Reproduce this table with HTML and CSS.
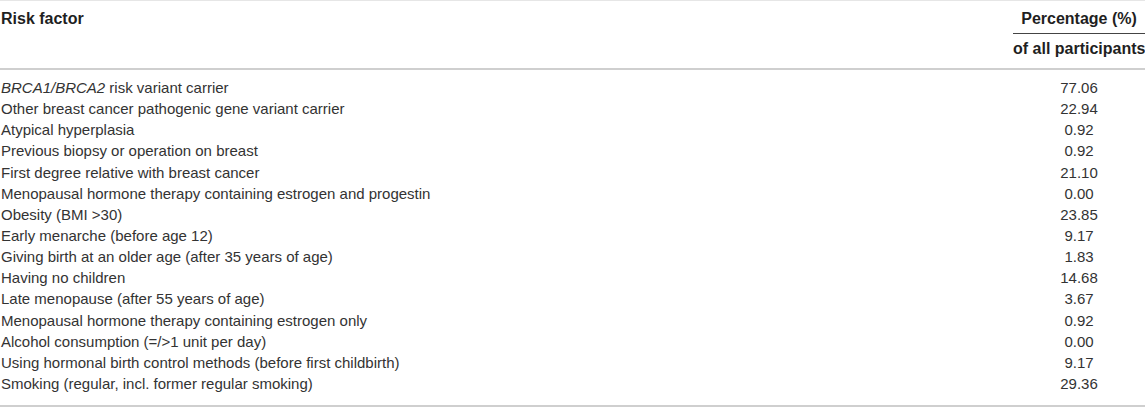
FILE: index.html
```html
<!DOCTYPE html>
<html lang="en">
<head>
<meta charset="utf-8">
<title>Risk factors</title>
<link rel="stylesheet" href="styles.css">
</head>
<body>
<table class="risk-table">
  <colgroup>
    <col class="col-factor">
    <col class="col-pct">
  </colgroup>
  <thead>
    <tr class="head-top">
      <th class="factor-head" rowspan="2">Risk factor</th>
      <th class="pct-head">Percentage (%)</th>
    </tr>
    <tr class="head-sub">
      <th class="pct-sub">of all participants</th>
    </tr>
  </thead>
  <tbody>
    <tr class="first"><td><i>BRCA1/BRCA2</i> risk variant carrier</td><td>77.06</td></tr>
    <tr><td>Other breast cancer pathogenic gene variant carrier</td><td>22.94</td></tr>
    <tr><td>Atypical hyperplasia</td><td>0.92</td></tr>
    <tr><td>Previous biopsy or operation on breast</td><td>0.92</td></tr>
    <tr><td>First degree relative with breast cancer</td><td>21.10</td></tr>
    <tr><td>Menopausal hormone therapy containing estrogen and progestin</td><td>0.00</td></tr>
    <tr><td>Obesity (BMI &gt;30)</td><td>23.85</td></tr>
    <tr><td>Early menarche (before age 12)</td><td>9.17</td></tr>
    <tr><td>Giving birth at an older age (after 35 years of age)</td><td>1.83</td></tr>
    <tr><td>Having no children</td><td>14.68</td></tr>
    <tr><td>Late menopause (after 55 years of age)</td><td>3.67</td></tr>
    <tr><td>Menopausal hormone therapy containing estrogen only</td><td>0.92</td></tr>
    <tr><td>Alcohol consumption (=/&gt;1 unit per day)</td><td>0.00</td></tr>
    <tr><td>Using hormonal birth control methods (before first childbirth)</td><td>9.17</td></tr>
    <tr class="last"><td>Smoking (regular, incl. former regular smoking)</td><td>29.36</td></tr>
  </tbody>
</table>
</body>
</html>
```
FILE: styles.css
```css
html, body {
  margin: 0;
  padding: 0;
  background: #ffffff;
}

body {
  font-family: "Liberation Sans", Arial, Helvetica, sans-serif;
  font-size: 15px;
  color: #333333;
}

.risk-table {
  width: 1145px;
  border-collapse: collapse;
  border-spacing: 0;
  table-layout: fixed;
  border-top: 1px solid #e6e6e6;
  border-bottom: 2px solid #cfcfcf;
}

.col-factor { width: 1013px; }
.col-pct { width: 132px; }

.risk-table th {
  font-size: 16px;
  font-weight: bold;
  color: #1f1f1f;
  line-height: 20px;
  padding: 0;
}

.factor-head {
  text-align: left;
  vertical-align: top;
  padding: 8px 0 0 1px !important;
  border-bottom: 2px solid #cfcfcf;
}

.pct-head {
  text-align: center;
  white-space: nowrap;
  padding: 8px 0 4px 0 !important;
  border-bottom: 1px solid #444444;
}

.pct-sub {
  text-align: center;
  white-space: nowrap;
  padding: 5px 0 9px 0 !important;
  border-bottom: 2px solid #cfcfcf;
}

.risk-table td {
  padding: 0 0 0 1px;
  line-height: 21.14px;
  vertical-align: middle;
  white-space: nowrap;
}

.risk-table td + td {
  padding: 0;
  text-align: center;
}

.risk-table tr.first td {
  padding-top: 7px;
}

.risk-table tr.last td {
  padding-bottom: 11px;
}
```
